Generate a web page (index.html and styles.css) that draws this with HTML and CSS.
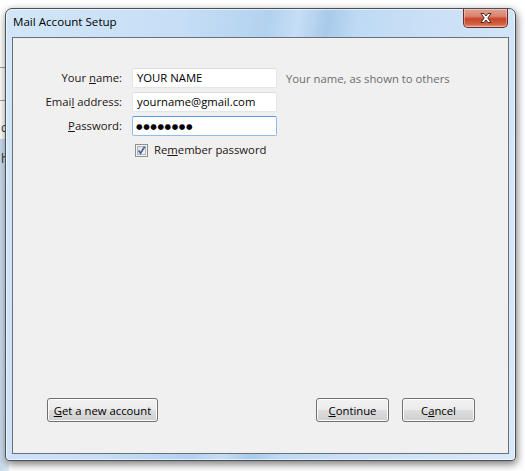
FILE: index.html
```html
<!DOCTYPE html>
<html>
<head>
<meta charset="utf-8">
<title>Mail Account Setup</title>
<link rel="stylesheet" href="styles.css">
</head>
<body>
<div class="desktop">
  <div class="backapp">
    <div class="bk-line l1"></div>
    <div class="bk-line l2"></div>
    <div class="bk-text t1">c</div>
    <div class="bk-strip"><span class="bk-text t2">h</span></div>
  </div>

  <div class="window">
    <div class="titlebar">
      <span class="title">Mail Account Setup</span>
      <div class="close">
        <svg width="20" height="12" viewBox="0 0 20 12">
          <path d="M5 1.5 L8 1.5 L10 4 L12 1.5 L15 1.5 L11.8 6 L15 10.5 L12 10.5 L10 8 L8 10.5 L5 10.5 L8.2 6 Z" fill="#fff" stroke="#4a2a22" stroke-width="1" stroke-linejoin="round"/>
        </svg>
      </div>
    </div>
    <div class="client">
      <div class="form">
        <label class="lbl">Your <u>n</u>ame:</label>
        <div class="field">YOUR NAME</div>
        <span class="hint">Your name, as shown to others</span>

        <label class="lbl">Emai<u>l</u> address:</label>
        <div class="field">yourname@gmail.com</div>
        <span></span>

        <label class="lbl"><u>P</u>assword:</label>
        <div class="field focused"><span class="dots">●●●●●●●●</span></div>
        <span></span>

        <span></span>
        <div class="remember">
          <svg class="cb" width="13" height="13" viewBox="0 0 13 13">
            <defs>
              <linearGradient id="cbg" x1="0" y1="0" x2="1" y2="1">
                <stop offset="0" stop-color="#dcdcdc"/>
                <stop offset="1" stop-color="#fbfbfb"/>
              </linearGradient>
            </defs>
            <rect x="0.5" y="0.5" width="12" height="12" fill="#f4f4f4" stroke="#8f8f8f"/>
            <rect x="2.5" y="2.5" width="8" height="8" fill="url(#cbg)" stroke="#aeb3b9"/>
            <path d="M3.6 6.4 L5.6 9.3 L9.6 2.8" fill="none" stroke="#4b61a6" stroke-width="1.7"/>
          </svg>
          <span>Re<u>m</u>ember password</span>
        </div>
        <span></span>
      </div>

      <div class="spacer"></div>

      <div class="buttons">
        <button class="btn wide"><u>G</u>et a new account</button>
        <div class="grow"></div>
        <button class="btn"><u>C</u>ontinue</button>
        <button class="btn">C<u>a</u>ncel</button>
      </div>
    </div>
  </div>
</div>
</body>
</html>
```
FILE: styles.css
```css
* { box-sizing: border-box; }

html, body {
  margin: 0;
  padding: 0;
  background: #ffffff;
}

.desktop {
  position: relative;
  width: 525px;
  height: 471px;
  overflow: hidden;
  font-family: "Open Sans", "Noto Sans", sans-serif;
  font-size: 11.3px;
}

/* application behind the dialog */
.backapp {
  position: absolute;
  left: 0;
  top: 0;
  width: 40px;
  height: 471px;
  background: #ffffff;
}
.bk-line {
  height: 1px;
  background: #a0a0a0;
  margin: 0;
}
.bk-line.l1 { margin-top: 67px; }
.bk-line.l2 { margin-top: 32px; }
.bk-text {
  display: block;
  color: #333;
  font-size: 12px;
  line-height: 14px;
  padding-left: 1px;
}
.bk-text.t1 { margin-top: 20px; }
.bk-strip {
  margin-top: 4px;
  height: 340px;
  background: linear-gradient(90deg, #c7dbee 0, #dde9f5 8px, #ffffff 10px);
}
.bk-text.t2 { padding-top: 13px; }

/* dialog window */
.window {
  position: absolute;
  left: 5px;
  top: 8px;
  width: 511px;
  height: 453px;
  border: 1px solid #4a4f55;
  border-radius: 7px 7px 4px 4px;
  padding: 0 6px 6px 6px;
  display: flex;
  flex-direction: column;
  background: linear-gradient(100deg, #d3e6f9 0%, #c6def6 30%, #b3d2ef 45%, #c6def6 50%, #a9caea 55%, #bedaf4 60%, #cae0f6 72%, #d8e9f9 100%);
  box-shadow: 0 0 0 1px rgba(255,255,255,0.6) inset, 1px 3px 9px rgba(0,0,0,0.55);
}

.titlebar {
  height: 28px;
  display: flex;
  align-items: flex-start;
  flex-shrink: 0;
}
.title {
  margin-top: 5px;
  margin-left: 1px;
  font-size: 11.6px;
  color: #000;
  line-height: 16px;
}
.close {
  margin-left: auto;
  margin-right: 1px;
  width: 45px;
  height: 19px;
  border: 1px solid #6b2d23;
  border-top: none;
  border-radius: 0 0 5px 5px;
  background: linear-gradient(180deg, #e2a292 0%, #d9826c 40%, #c8452a 55%, #d16143 85%, #e5a08a 100%);
  display: flex;
  align-items: center;
  justify-content: center;
  box-shadow: inset 0 0 0 1px rgba(255,255,255,0.35);
}
.close svg { display: block; }

.client {
  flex: 1;
  background: #f0f0f0;
  border: 1px solid #686f78;
  display: flex;
  flex-direction: column;
  color: #1e1414;
}

.form {
  margin-top: 30px;
  display: grid;
  grid-template-columns: 109px 145px auto;
  column-gap: 10px;
  row-gap: 4px;
  align-items: center;
}
.lbl {
  text-align: right;
  line-height: 20px;
  white-space: nowrap;
}
.field {
  height: 20px;
  background: #fff;
  border: 1px solid #e2e5ea;
  border-top-color: #dadde2;
  border-radius: 2px;
  padding: 0 0 0 4px;
  line-height: 18px;
  color: #000;
  white-space: nowrap;
  overflow: hidden;
}
.field.focused {
  border-color: #8fbde9;
  border-top-color: #5a99d8;
  padding-left: 3px;
}
.dots {
  font-family: "DejaVu Sans", sans-serif;
  font-size: 7.5px;
  letter-spacing: 0.6px;
  position: relative;
  top: -1px;
}
.hint {
  color: #6d6d6d;
  margin-left: -1px;
  white-space: nowrap;
}
.remember {
  display: flex;
  align-items: center;
  gap: 6px;
  margin-top: 2px;
  padding-left: 3px;
  line-height: 16px;
}
.cb { display: block; flex-shrink: 0; }

.spacer { flex: 1; }

.buttons {
  display: flex;
  align-items: center;
  gap: 13px;
  padding: 0 33px 31px 34px;
}
.grow { flex: 1; }
.btn {
  font-family: inherit;
  font-size: 11.3px;
  color: #000;
  height: 24px;
  width: 73px;
  padding: 0;
  border: 1px solid #707070;
  border-radius: 3px;
  background: linear-gradient(180deg, #f2f2f2 0%, #ebebeb 48%, #dddddd 52%, #cfcfcf 100%);
  box-shadow: inset 0 0 0 1px #fcfcfc;
}
.btn.wide { width: 111px; }
```
